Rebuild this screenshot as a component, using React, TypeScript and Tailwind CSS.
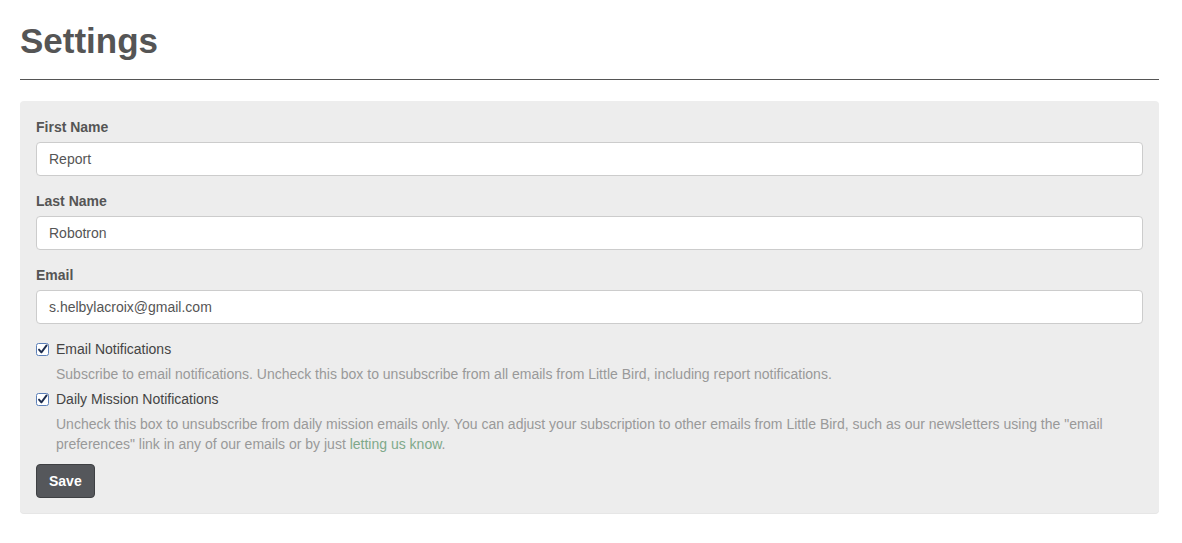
import React from "react";

function CheckMark() {
  return (
    <svg width="13" height="13" viewBox="0 0 13 13" className="shrink-0">
      <rect x="0.5" y="0.5" width="12" height="12" rx="2" fill="#fff" stroke="#5b7fb8" />
      <path d="M3 6.6 L5.4 9.4 L10.6 2.4" fill="none" stroke="#1d2c4d" strokeWidth="1.9" strokeLinecap="round" strokeLinejoin="round" />
    </svg>
  );
}

function Field({ label, value }: { label: string; value: string }) {
  return (
    <div className="mb-[15px]">
      <label className="mb-[5px] block text-sm leading-5 font-bold text-[#555]">{label}</label>
      <input
        readOnly
        value={value}
        className="block h-[34px] w-full rounded border border-[#ccc] bg-white px-3 text-sm text-[#555] outline-none"
      />
    </div>
  );
}

export default function App() {
  return (
    <div className="min-h-screen bg-white pt-[21px] pr-[23px] pl-5 font-['Liberation_Sans',Arial,sans-serif]">
      <h1 className="border-b border-[#555] pb-[18px] text-[35px] leading-10 font-bold text-[#555]">Settings</h1>

      <form className="mt-[21px] rounded bg-[#ededed] px-4 pt-4 pb-[15px] shadow-[0_1px_0_#e6e6e6]">
        <Field label="First Name" value="Report" />
        <Field label="Last Name" value="Robotron" />
        <Field label="Email" value="s.helbylacroix@gmail.com" />

        <div className="flex items-center gap-[7px] text-sm leading-5 text-[#444]">
          <CheckMark />
          <span>Email Notifications</span>
        </div>
        <p className="mt-[5px] pl-5 text-sm leading-5 text-[#999]">
          Subscribe to email notifications. Uncheck this box to unsubscribe from all emails from Little Bird, including report notifications.
        </p>

        <div className="mt-[5px] flex items-center gap-[7px] text-sm leading-5 text-[#444]">
          <CheckMark />
          <span>Daily Mission Notifications</span>
        </div>
        <p className="mt-[5px] pl-5 text-sm leading-5 text-[#999]">
          Uncheck this box to unsubscribe from daily mission emails only. You can adjust your subscription to other emails from Little Bird, such as our newsletters using the "email
          preferences" link in any of our emails or by just <a className="text-[#7fa98a]">letting us know</a>.
        </p>

        <button
          type="button"
          className="mt-[10px] h-[34px] rounded border border-[#3e4043] bg-[#55575b] px-3 text-sm font-bold text-white"
        >
          Save
        </button>
      </form>
    </div>
  );
}
